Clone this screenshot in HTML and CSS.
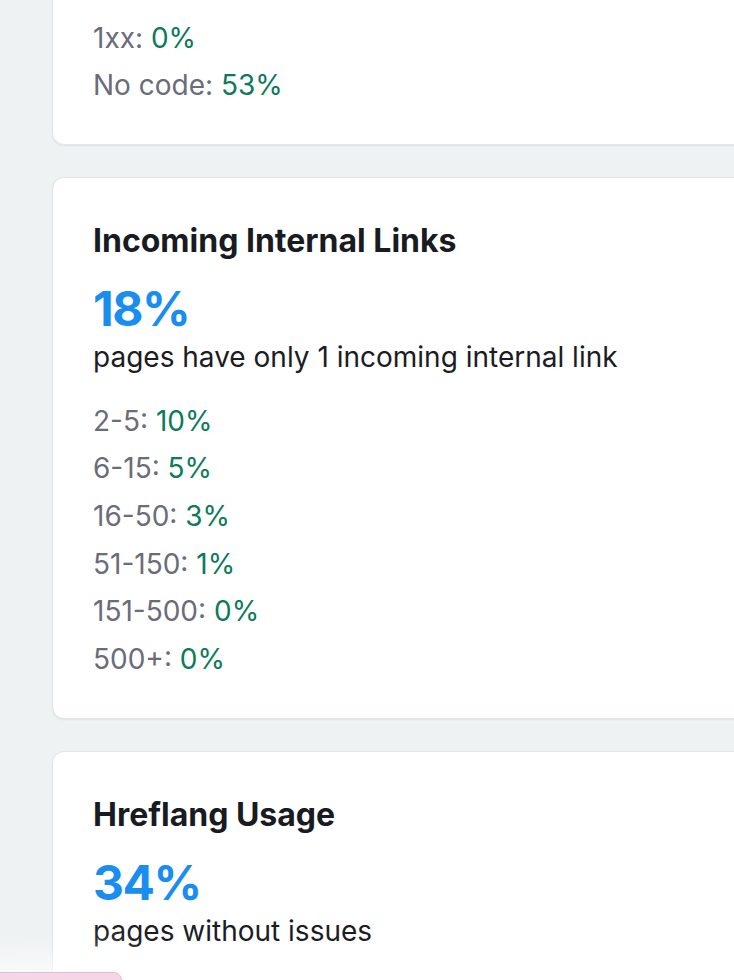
FILE: index.html
```html
<!DOCTYPE html>
<html lang="en">
<head>
<meta charset="utf-8">
<title>Site Audit</title>
<link rel="stylesheet" href="styles.css">
</head>
<body>
<main class="page">
  <section class="card card-first">
    <ul class="stats">
      <li><span class="label">2xx:</span> <span class="val">47%</span></li>
      <li><span class="label">1xx:</span> <span class="val">0%</span></li>
      <li><span class="label">No code:</span> <span class="val">53%</span></li>
    </ul>
  </section>

  <section class="card">
    <h2 class="title">Incoming Internal Links</h2>
    <div class="big">18%</div>
    <p class="sub">pages have only 1 incoming internal link</p>
    <ul class="stats">
      <li><span class="label">2-5:</span> <span class="val">10%</span></li>
      <li><span class="label">6-15:</span> <span class="val">5%</span></li>
      <li><span class="label">16-50:</span> <span class="val">3%</span></li>
      <li><span class="label">51-150:</span> <span class="val">1%</span></li>
      <li><span class="label">151-500:</span> <span class="val">0%</span></li>
      <li><span class="label">500+:</span> <span class="val">0%</span></li>
    </ul>
  </section>

  <section class="card">
    <h2 class="title">Hreflang Usage</h2>
    <div class="big">34%</div>
    <p class="sub">pages without issues</p>
  </section>
</main>
<div class="float-tab"></div>
</body>
</html>
```

FILE: styles.css
```css
html, body {
  margin: 0;
  padding: 0;
}
body {
  background: #eef2f3;
  font-family: Inter, "Noto Sans", "Liberation Sans", sans-serif;
  overflow: hidden;
  height: 980px;
}
.page {
  padding-left: 52px;
  display: flex;
  flex-direction: column;
  gap: 32px;
}
.card {
  width: 760px;
  box-sizing: border-box;
  background: #ffffff;
  border: 1px solid #e1e5e8;
  border-radius: 12px;
  box-shadow: 0 1px 2px rgba(20, 30, 40, 0.07);
  padding: 44px 40px 35px 40px;
}
.card-first {
  margin-top: -78px;
  padding-bottom: 34px;
}
.title {
  margin: 0;
  font-size: 32px;
  line-height: 38px;
  font-weight: 700;
  color: #191b23;
}
.big {
  margin-top: 20px;
  font-size: 48px;
  line-height: 58px;
  font-weight: 700;
  color: #1a8df0;
  letter-spacing: -1.5px;
}
.sub {
  margin: 1px 0 0 0;
  font-size: 28px;
  line-height: 36px;
  color: #1b1c24;
}
.stats {
  list-style: none;
  margin: 23px 0 0 0;
  padding: 0;
  font-size: 28px;
  line-height: 47.6px;
}
.card-first .stats {
  margin-top: 0;
}
.label {
  color: #6b6c7a;
}
.val {
  color: #0d7a5b;
}
.float-tab {
  position: fixed;
  left: -10px;
  bottom: -34px;
  width: 130px;
  height: 40px;
  background: #f6d6e6;
  border: 1px solid #e6bdd0;
  border-radius: 8px;
  box-shadow: 0 0 36px 14px rgba(255, 255, 255, 0.75);
}
```
